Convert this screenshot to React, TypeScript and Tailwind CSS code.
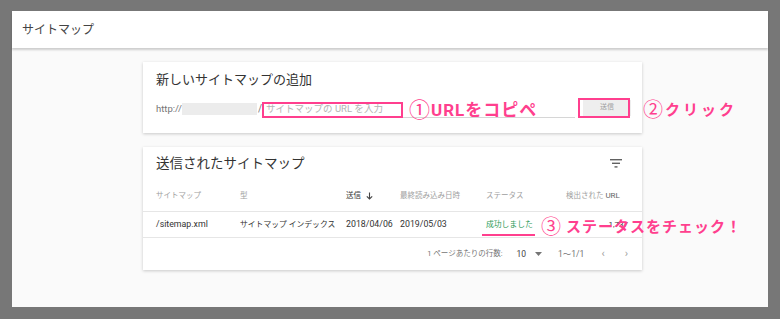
const font = { fontFamily: "Roboto, 'Noto Sans CJK JP', sans-serif" };

function FilterIcon() {
  return (
    <svg width="12" height="9" viewBox="0 0 12 9" className="text-[#616161]">
      <rect x="0" y="0" width="12" height="1.4" fill="currentColor" />
      <rect x="2" y="3.6" width="8" height="1.4" fill="currentColor" />
      <rect x="4.5" y="7.2" width="3" height="1.4" fill="currentColor" />
    </svg>
  );
}

const cols = "grid grid-cols-[84px_106px_54px_86px_80px_1fr] pl-[13px] pr-[12px] items-center";

export default function App() {
  return (
    <div className="w-[780px] h-[319px] bg-[#777777] pt-[11px] px-[12px] pb-[12px]" style={font}>
      <div className="w-full h-full bg-[#fafafa] flex flex-col">
        <div className="h-[37px] bg-white flex items-center pl-[10px] text-[12px] text-[#444] shadow-[0_2px_2px_rgba(0,0,0,0.18)] z-10">
          サイトマップ
        </div>

        <div className="relative flex-1 pl-[131px] pt-[14px] flex flex-col gap-[14px]">
          {/* card 1 */}
          <div className="relative w-[499px] h-[71px] bg-white shadow-[0_1px_3px_rgba(0,0,0,0.2)] flex flex-col">
            <div className="pl-[13px] pt-[8px] text-[13px] text-[#333]">新しいサイトマップの追加</div>
            <div className="flex items-end pl-[13px] mt-[10px]">
              <span className="text-[9.5px] text-[#757575] leading-[14px] mb-[2px]">http://</span>
              <span className="w-[75px] h-[12px] bg-[#ececec] mb-[3px]"></span>
              <span className="text-[10px] text-[#757575] leading-[14px] ml-[1px] mb-[2px]">/</span>
              <div className="ml-[3px] w-[310px] border-b border-[#d6d6d6] pb-[1px] pl-[1px] text-[9.5px] text-[#b3b3b3] leading-[14px]">
                サイトマップの URL を入力
              </div>
              <div className="ml-[8px] mb-[2px] w-[48px] h-[16px] bg-[#eeeeee] text-[7px] text-[#9e9e9e] flex items-center justify-center">
                送信
              </div>
            </div>
            <div className="absolute left-[119px] top-[40px] w-[141px] h-[16px] border-2 border-[#ff3f8e]"></div>
            <div className="absolute left-[435px] top-[36px] w-[52px] h-[20px] border-2 border-[#ff3f8e]"></div>
          </div>

          {/* card 2 */}
          <div className="relative w-[499px] h-[123px] bg-white shadow-[0_1px_3px_rgba(0,0,0,0.2)] flex flex-col">
            <div className="h-[33px] flex items-center justify-between pl-[13px] pr-[20px]">
              <span className="text-[13.5px] text-[#333]">送信されたサイトマップ</span>
              <FilterIcon />
            </div>
            <div className={`${cols} h-[32px] border-b border-[#e6e6e6] text-[7.5px] text-[#9e9e9e]`}>
              <span>サイトマップ</span>
              <span>型</span>
              <span className="text-[#333] flex items-center gap-[5px]">
                送信
                <svg width="7" height="8" viewBox="0 0 7 8">
                  <path d="M3.5 0.5 V7 M0.8 4.3 L3.5 7 L6.2 4.3" stroke="#444" strokeWidth="1.1" fill="none" />
                </svg>
              </span>
              <span>最終読み込み日時</span>
              <span>ステータス</span>
              <span>検出された <span className="text-[#666] text-[8px]">URL</span></span>
            </div>
            <div className={`${cols} h-[26px] border-b border-[#e6e6e6] text-[8.8px] text-[#333]`}>
              <span>/sitemap.xml</span>
              <span className="text-[7.8px]">サイトマップ インデックス</span>
              <span>2018/04/06</span>
              <span>2019/05/03</span>
              <span className="text-[#2e9a57] text-[7.8px]">成功しました</span>
              <span className="text-right pr-[2px] text-[8px]">1,737</span>
            </div>
            <div className="h-[32px] flex items-center justify-end pr-[14px] text-[7.5px] text-[#757575]">
              <span>1 ページあたりの行数:</span>
              <span className="ml-[14px] text-[#444] text-[8.5px]">10</span>
              <svg width="7" height="4" viewBox="0 0 7 4" className="ml-[9px]">
                <path d="M0 0 H7 L3.5 4 Z" fill="#757575" />
              </svg>
              <span className="ml-[16px] text-[8.5px]">1〜1/1</span>
              <span className="ml-[17px] text-[#a0a0a0] text-[11px]">‹</span>
              <span className="ml-[20px] text-[#a0a0a0] text-[11px]">›</span>
            </div>
            <div className="absolute left-[339px] top-[87px] w-[53px] h-[2px] bg-[#ff3f8e]"></div>
          </div>

          {/* annotations */}
          <div className="absolute left-[397px] top-[52px] flex items-center text-[#ff3f8e] font-bold leading-none">
            <span className="text-[21px] font-normal">①</span>
            <span className="text-[17px] ml-[1px] tracking-[1px]">URLをコピペ</span>
          </div>
          <div className="absolute left-[631px] top-[52px] flex items-center text-[#ff3f8e] font-bold leading-none">
            <span className="text-[20px] font-normal">②</span>
            <span className="text-[15px] ml-[2px] tracking-[3px]">クリック</span>
          </div>
          <div className="absolute left-[529px] top-[169px] flex items-center text-[#ff3f8e] font-bold leading-none">
            <span className="text-[20px] font-normal">③</span>
            <span className="text-[15px] ml-[5px] tracking-[1px]">ステータスをチェック！</span>
          </div>
        </div>
      </div>
    </div>
  );
}
